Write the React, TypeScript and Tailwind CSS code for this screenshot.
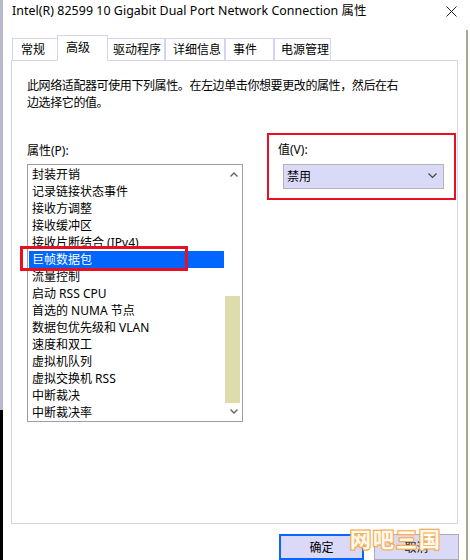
import React from "react";

const items = [
  "封装开销",
  "记录链接状态事件",
  "接收方调整",
  "接收缓冲区",
  "接收片断结合 (IPv4)",
  "巨帧数据包",
  "流量控制",
  "启动 RSS CPU",
  "首选的 NUMA 节点",
  "数据包优先级和 VLAN",
  "速度和双工",
  "虚拟机队列",
  "虚拟交换机 RSS",
  "中断裁决",
  "中断裁决率",
];

const tabs = [
  { label: "常规", w: "w-[47px]", pl: "pl-[8px]" },
  { label: "高级", w: "w-[51px]", pl: "pl-[8px]", active: true },
  { label: "驱动程序", w: "w-[58px]", pl: "pl-[5px]" },
  { label: "详细信息", w: "w-[60px]", pl: "pl-[7px]" },
  { label: "事件", w: "w-[49px]", pl: "pl-[7px]" },
  { label: "电源管理", w: "w-[57px]", pl: "pl-[6px]" },
];

function Chevron({ up }: { up?: boolean }) {
  return (
    <svg width="8" height="5" viewBox="0 0 8 5" className="block">
      <path
        d={up ? "M0.5 4.5 L4 1 L7.5 4.5" : "M0.5 0.5 L4 4 L7.5 0.5"}
        fill="none"
        stroke="#606060"
        strokeWidth="1.3"
      />
    </svg>
  );
}

export default function App() {
  return (
    <div
      className="relative flex h-[560px] w-[470px] overflow-hidden bg-white text-[12px] text-black"
      style={{ fontFamily: '"Noto Sans", "Noto Sans CJK SC", sans-serif' }}
    >
      {/* left window frame */}
      <div className="flex w-[3px] flex-col">
        <div className="h-[410px] bg-[#b8b8cc]" />
        <div className="flex-1 bg-black" />
      </div>

      {/* dialog body */}
      <div className="flex w-[463px] flex-col">
        {/* title bar */}
        <div className="flex h-[23px] items-center pl-[9px] pr-[9px]">
          <span className="text-[12.4px] leading-[16px] tracking-[0.05px]">
            Intel(R) 82599 10 Gigabit Dual Port Network Connection 属性
          </span>
          <svg width="11" height="11" viewBox="0 0 11 11" className="ml-auto">
            <path d="M0.5 0.5 L10.5 10.5 M10.5 0.5 L0.5 10.5" stroke="#202020" strokeWidth="1" />
          </svg>
        </div>

        {/* tabs */}
        <div className="ml-[9px] mt-[12px] flex h-[25px] items-end">
          {tabs.map((t) =>
            t.active ? (
              <div
                key={t.label}
                className={`relative z-10 -mb-px -ml-[2px] -mr-[1px] flex h-[26px] ${t.w} items-start border border-b-0 border-[#d4d4f2] bg-white ${t.pl} pt-[3px] leading-[17px]`}
              >
                {t.label}
              </div>
            ) : (
              <div
                key={t.label}
                className={`flex h-[22px] ${t.w} items-center border border-b-0 border-[#d4d4f2] bg-white ${t.pl} leading-[17px]`}
              >
                {t.label}
              </div>
            )
          )}
        </div>

        {/* property page */}
        <div className="ml-[8px] flex h-[468px] w-[447px] flex-col border border-[#d4d4f2] pl-[15px] pt-[16px]">
          <p className="leading-[17px] tracking-[-0.4px]">
            此网络适配器可使用下列属性。在左边单击你想要更改的属性，然后在右
            <br />
            边选择它的值。
          </p>

          <div className="flex">
            {/* property list */}
            <div className="flex w-[216px] flex-col">
              <div className="mt-[31px] leading-[17px]">属性(P):</div>
              <div className="mt-[5px] flex h-[258px] border border-[#9c9cb0] p-px">
                <ul className="flex-1 leading-[17px]">
                  {items.map((it) =>
                    it === "巨帧数据包" ? (
                      <li key={it} className="h-[17px] whitespace-nowrap bg-[#0066ff] pl-[3px] text-white">
                        {it}
                      </li>
                    ) : (
                      <li key={it} className="h-[17px] whitespace-nowrap pl-[3px]">
                        {it}
                      </li>
                    )
                  )}
                </ul>
                <div className="flex w-[17px] flex-col items-center">
                  <div className="flex h-[17px] items-center justify-center pl-[2px]">
                    <Chevron up />
                  </div>
                  <div className="flex flex-1 flex-col">
                    <div className="h-[113px]" />
                    <div className="h-[107px] w-[15px] bg-[#dcdcac]" />
                  </div>
                  <div className="flex h-[17px] items-center justify-center pl-[2px]">
                    <Chevron />
                  </div>
                </div>
              </div>
            </div>

            {/* value selector */}
            <div className="ml-[35px] flex flex-col">
              <div className="mt-[30px] leading-[17px]">值(V):</div>
              <div className="ml-[5px] mt-[6px] flex h-[25px] w-[161px] items-center border border-[#b4b4b4] bg-[#dadaf8] pl-[3px] pr-[6px]">
                <span className="leading-[17px]">禁用</span>
                <svg width="9" height="6" viewBox="0 0 9 6" className="ml-auto">
                  <path d="M0.5 0.5 L4.5 4.5 L8.5 0.5" fill="none" stroke="#404040" strokeWidth="1.1" />
                </svg>
              </div>
            </div>
          </div>
        </div>

        {/* dialog buttons */}
        <div className="mt-[10px] flex justify-end gap-[10px] pr-[7px]">
          <button className="flex h-[26px] w-[85px] items-center justify-center border-2 border-[#0a66ff] bg-[#dadaf8] leading-[17px]">
            确定
          </button>
          <button className="flex h-[26px] w-[85px] items-center justify-center border border-[#adadad] bg-[#dadaf8] leading-[17px]">
            取消
          </button>
        </div>
      </div>

      {/* right window frame */}
      <div className="mt-[30px] w-[2px] bg-[#aaa98f]" />

      {/* red annotation marks */}
      <div className="pointer-events-none absolute left-[20px] top-[246px] h-[25px] w-[168px] border-[3px] border-[#e81020]" />
      <div className="pointer-events-none absolute left-[267px] top-[133px] h-[67px] w-[189px] border-2 border-[#e81020]" />

      {/* site stamp */}
      <div
        className="pointer-events-none absolute left-[350px] top-[525px] text-[21px] font-bold leading-[26px] tracking-[2px] text-[#fffaf0] [paint-order:stroke_fill] [-webkit-text-stroke:2.5px_#f4a850] [text-shadow:0_0_3px_#f8c070]"
        style={{ fontFamily: '"Noto Sans CJK SC", sans-serif' }}
      >
        网吧三国
      </div>
    </div>
  );
}
